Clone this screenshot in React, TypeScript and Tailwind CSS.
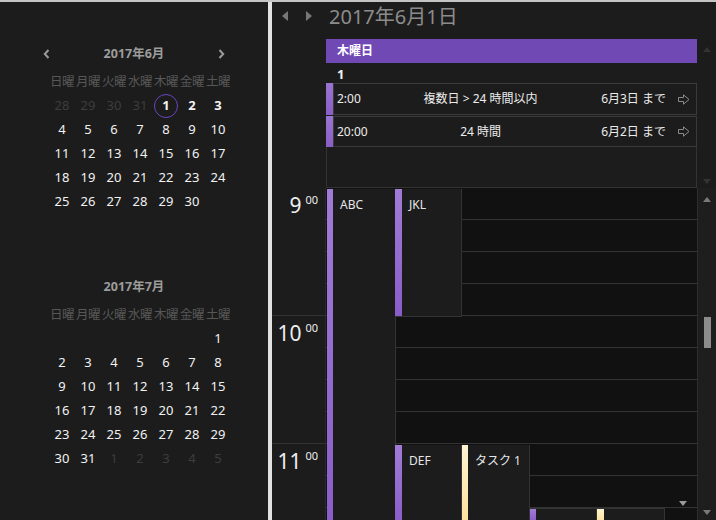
import React from "react";

type Day = { d: number | null; muted?: boolean; bold?: boolean; today?: boolean };

const WEEK = ["日曜", "月曜", "火曜", "水曜", "木曜", "金曜", "土曜"];

const range = (a: number, b: number) => Array.from({ length: b - a + 1 }, (_, i) => a + i);

const JUNE: Day[] = [
  ...[28, 29, 30, 31].map((d) => ({ d, muted: true })),
  { d: 1, bold: true, today: true },
  { d: 2, bold: true },
  { d: 3, bold: true },
  ...range(4, 30).map((d) => ({ d })),
];

const JULY: Day[] = [
  ...range(1, 6).map(() => ({ d: null })),
  ...range(1, 31).map((d) => ({ d })),
  ...range(1, 5).map((d) => ({ d, muted: true })),
];

function Chevron({ dir }: { dir: "left" | "right" }) {
  return (
    <svg width="7" height="10" viewBox="0 0 7 10">
      <path
        d={dir === "left" ? "M5.5 1 L1.8 5 L5.5 9" : "M1.5 1 L5.2 5 L1.5 9"}
        fill="none"
        stroke="#9a9a9a"
        strokeWidth="2"
      />
    </svg>
  );
}

function Month({ title, days, nav }: { title: string; days: Day[]; nav?: boolean }) {
  return (
    <div className="w-[182px] ml-[49px]">
      <div className="flex h-[24px] w-[182px] -ml-[6px] items-center justify-between">
        <span className="w-[7px]">{nav && <Chevron dir="left" />}</span>
        <span className="text-[12.5px] font-bold text-[#9c9c9c]">{title}</span>
        <span className="w-[7px]">{nav && <Chevron dir="right" />}</span>
      </div>
      <div className="mt-[4px] grid grid-cols-7 h-[24px] items-center">
        {WEEK.map((w) => (
          <span key={w} className="text-center text-[12.5px] text-[#575757] tracking-[-0.5px]">
            {w}
          </span>
        ))}
      </div>
      <div className="grid grid-cols-7">
        {days.map((x, i) => (
          <div key={i} className="h-[24px] flex items-center justify-center">
            {x.d !== null && (
              <span
                className={
                  "flex h-[24px] w-[24px] items-center justify-center rounded-full text-[13px] " +
                  (x.muted ? "text-[#3d3d3d] " : "text-[#f2f2f2] ") +
                  (x.bold ? "font-bold " : "") +
                  (x.today ? "border border-[#6a45c0]" : "")
                }
              >
                {x.d}
              </span>
            )}
          </div>
        ))}
      </div>
    </div>
  );
}

function Tri({ dir, color }: { dir: "up" | "down" | "left" | "right"; color: string }) {
  const pts = {
    up: "0,5 4,0 8,5",
    down: "0,0 8,0 4,5",
    left: "6,0 6,10 0,5",
    right: "0,0 0,10 6,5",
  }[dir];
  const v = dir === "left" || dir === "right";
  return (
    <svg width={v ? 6 : 8} height={v ? 10 : 5} viewBox={v ? "0 0 6 10" : "0 0 8 5"}>
      <polygon points={pts} fill={color} />
    </svg>
  );
}

function GoArrow() {
  return (
    <svg width="12" height="11" viewBox="0 0 12 11">
      <path
        d="M0.5 3.5 H5.5 V0.8 L11 5.5 L5.5 10.2 V7.5 H0.5 Z"
        fill="none"
        stroke="#8a8a8a"
        strokeWidth="1"
      />
    </svg>
  );
}

function AllDay({ time, title, until, first }: { time: string; title: string; until: string; first?: boolean }) {
  return (
    <div className={"flex " + (first ? "h-[32px]" : "mt-[1px] h-[31px]")}>
      <div className="w-[7px] bg-gradient-to-b from-[#9a74d2] to-[#8a5ec6]" />
      <div className="flex flex-1 items-center border border-[#3a3a3a] text-[12px] text-[#ececec]">
        <span className="w-[40px] pl-[3px]">{time}</span>
        <span className="flex-1 text-center pr-[14px]">{title}</span>
        <span>{until}</span>
        <span className="w-[30px] flex justify-end pr-[6px]">
          <GoArrow />
        </span>
      </div>
    </div>
  );
}

function Ev({
  label,
  color,
  cls,
  strip,
}: {
  label?: string;
  color: "purple" | "yellow";
  cls: string;
  strip: string;
}) {
  return (
    <div className={"absolute flex bg-[#1c1c1c] border-r border-b border-[#333] " + cls}>
      <div
        className={
          strip +
          " h-full " +
          (color === "purple"
            ? "bg-gradient-to-b from-[#a07cd6] to-[#8a5cc8]"
            : "bg-gradient-to-b from-[#fff5d2] to-[#ffe09c]")
        }
      />
      {label && <span className="pl-[7px] pt-[8px] text-[12px] leading-[16px] text-[#e6e6e6]">{label}</span>}
    </div>
  );
}

function Hour({ h }: { h: number }) {
  return (
    <div className="h-[128px] shrink-0 border-b border-[#333] flex justify-end pr-[7px] pt-[5px]">
      <span className="text-[21px] leading-[24px] text-[#eeeeee]">{h}</span>
      <span className="ml-[4px] text-[11px] leading-[14px] text-[#eeeeee]">00</span>
    </div>
  );
}

export default function App() {
  return (
    <div className="flex h-[520px] w-[716px] overflow-hidden border-t-2 border-[#c4c4c4] bg-[#1c1c1c] font-['Noto_Sans','Noto_Sans_CJK_JP',sans-serif]">
      {/* mini calendars */}
      <div className="w-[268px] shrink-0 pt-[40px]">
        <Month title="2017年6月" days={JUNE} nav />
        <div className="mt-[61px]">
          <Month title="2017年7月" days={JULY} />
        </div>
      </div>

      <div className="w-[4px] shrink-0 bg-[#e2e2e2]" />

      {/* day view */}
      <div className="flex w-[444px] flex-col">
        <div className="flex h-[37px] shrink-0 items-start pl-[10px] pt-[1px]">
          <span className="mt-[8px]">
            <Tri dir="left" color="#777" />
          </span>
          <span className="ml-[18px] mt-[8px]">
            <Tri dir="right" color="#777" />
          </span>
          <span className="ml-[17px] text-[20px] leading-[28px] text-[#8c8c8c]">2017年6月1日</span>
        </div>

        <div className="flex h-[149px] shrink-0">
          <div className="w-[54px]" />
          <div className="flex w-[371px] flex-col">
            <div className="flex h-[24px] items-center bg-[#7049b5] pl-[11px] text-[12px] font-bold text-white">
              木曜日
            </div>
            <div className="h-[20px] pl-[11px] text-[13px] font-bold leading-[22px] text-[#f0f0f0]">1</div>
            <AllDay first time="2:00" title="複数日 > 24 時間以内" until="6月3日 まで" />
            <AllDay time="20:00" title="24 時間" until="6月2日 まで" />
            <div className="flex-1 border-x border-b border-[#333]" />
          </div>
          <div className="flex w-[19px] flex-col items-center justify-between pt-[8px] pb-[4px]">
            <Tri dir="up" color="#333" />
            <Tri dir="down" color="#333" />
          </div>
        </div>

        <div className="flex flex-1 overflow-hidden">
          <div className="flex w-[54px] shrink-0 flex-col border-r border-[#2a2a2a]">
            <Hour h={9} />
            <Hour h={10} />
            <Hour h={11} />
          </div>
          <div className="relative w-[371px] shrink-0 bg-[#111111]">
            {Array.from({ length: 11 }).map((_, i) => (
              <div key={i} className="h-[32px] border-b border-[#333]" />
            ))}
            <Ev label="ABC" color="purple" cls="left-[1px] top-[1px] w-[69px] h-[340px]" strip="w-[6px]" />
            <Ev label="JKL" color="purple" cls="left-[69px] top-[1px] w-[67px] h-[128px]" strip="w-[7px]" />
            <Ev label="DEF" color="purple" cls="left-[69px] top-[257px] w-[67px] h-[80px]" strip="w-[7px]" />
            <Ev label="タスク 1" color="yellow" cls="left-[136px] top-[257px] w-[68px] h-[80px]" strip="w-[6px]" />
            <Ev color="purple" cls="left-[204px] top-[320px] w-[67px] h-[14px] border-t" strip="w-[6px]" />
            <Ev color="yellow" cls="left-[271px] top-[320px] w-[68px] h-[14px] border-t" strip="w-[7px]" />
            <div className="absolute left-[353px] top-[313px]">
              <Tri dir="down" color="#9a9a9a" />
            </div>
          </div>
          <div className="flex w-[19px] flex-col items-center border-l border-[#2e2e2e] bg-[#1e1e1e]">
            <div className="mt-[9px]">
              <Tri dir="up" color="#7a7a7a" />
            </div>
            <div className="mt-[115px] h-[31px] w-[7px] bg-[#8c8c8c]" />
            <div className="mt-auto mb-[5px]">
              <Tri dir="down" color="#7a7a7a" />
            </div>
          </div>
        </div>
      </div>
    </div>
  );
}
